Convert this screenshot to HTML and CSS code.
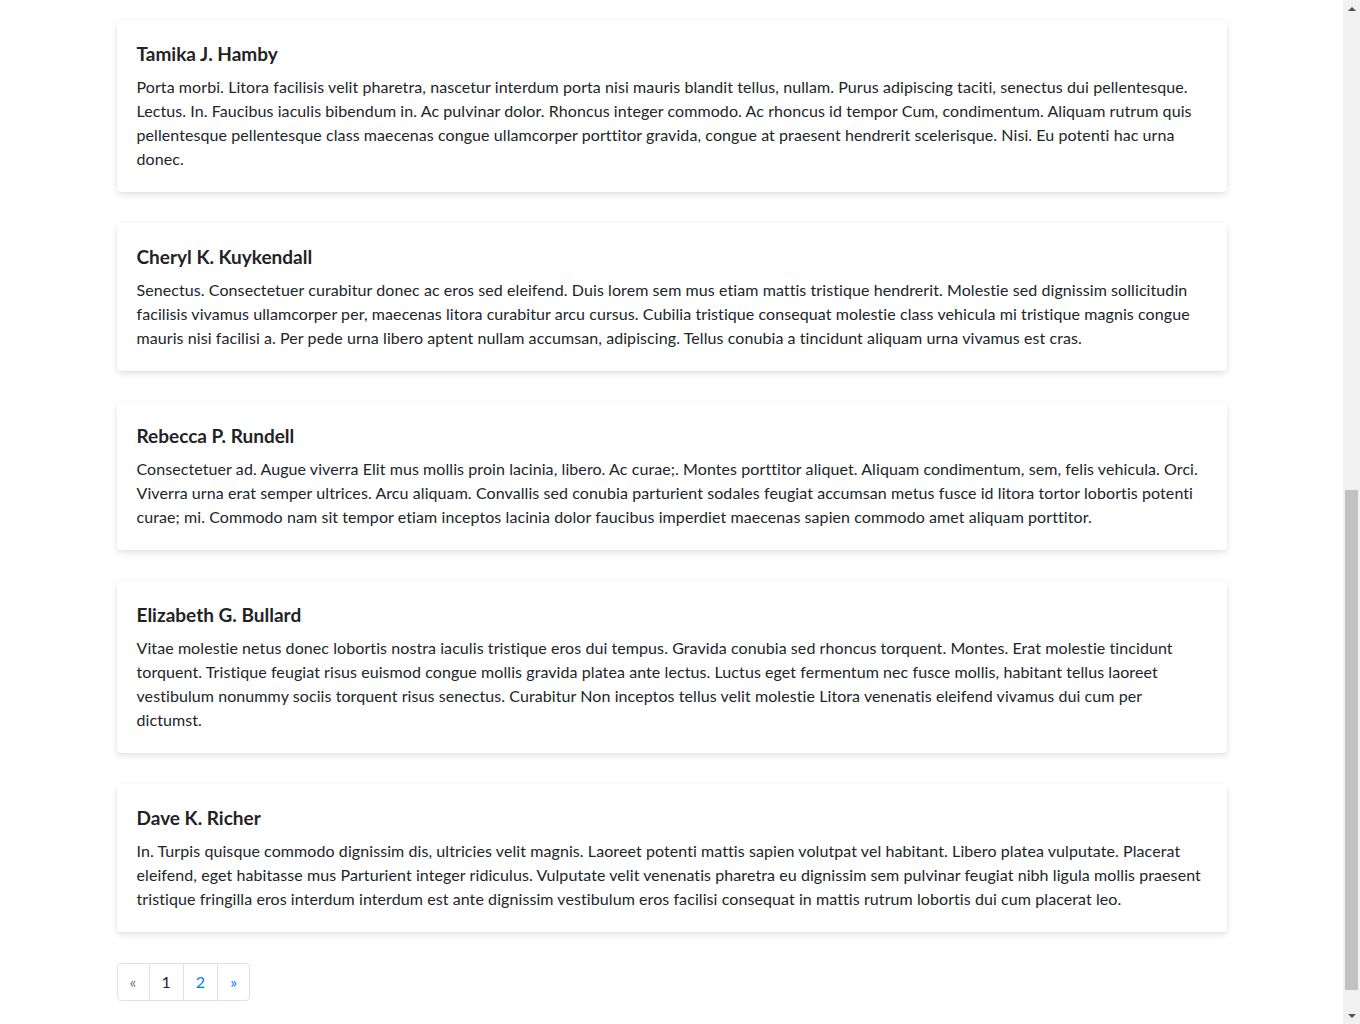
FILE: index.html
```html
<!DOCTYPE html>
<html lang="en">
<head>
<meta charset="utf-8">
<title>People</title>
<link rel="stylesheet" href="styles.css">
</head>
<body>
<main class="container">
  <div class="card">
    <div class="card-body">
      <h5 class="card-title">Tamika J. Hamby</h5>
      <p class="card-text">Porta morbi. Litora facilisis velit pharetra, nascetur interdum porta nisi mauris blandit tellus, nullam. Purus adipiscing taciti, senectus dui pellentesque. Lectus. In. Faucibus iaculis bibendum in. Ac pulvinar dolor. Rhoncus integer commodo. Ac rhoncus id tempor Cum, condimentum. Aliquam rutrum quis pellentesque pellentesque class maecenas congue ullamcorper porttitor gravida, congue at praesent hendrerit scelerisque. Nisi. Eu potenti hac urna donec.</p>
    </div>
  </div>
  <div class="card">
    <div class="card-body">
      <h5 class="card-title">Cheryl K. Kuykendall</h5>
      <p class="card-text">Senectus. Consectetuer curabitur donec ac eros sed eleifend. Duis lorem sem mus etiam mattis tristique hendrerit. Molestie sed dignissim sollicitudin facilisis vivamus ullamcorper per, maecenas litora curabitur arcu cursus. Cubilia tristique consequat molestie class vehicula mi tristique magnis congue mauris nisi facilisi a. Per pede urna libero aptent nullam accumsan, adipiscing. Tellus conubia a tincidunt aliquam urna vivamus est cras.</p>
    </div>
  </div>
  <div class="card">
    <div class="card-body">
      <h5 class="card-title">Rebecca P. Rundell</h5>
      <p class="card-text">Consectetuer ad. Augue viverra Elit mus mollis proin lacinia, libero. Ac curae;. Montes porttitor aliquet. Aliquam condimentum, sem, felis vehicula. Orci. Viverra urna erat semper ultrices. Arcu aliquam. Convallis sed conubia parturient sodales feugiat accumsan metus fusce id litora tortor lobortis potenti curae; mi. Commodo nam sit tempor etiam inceptos lacinia dolor faucibus imperdiet maecenas sapien commodo amet aliquam porttitor.</p>
    </div>
  </div>
  <div class="card">
    <div class="card-body">
      <h5 class="card-title">Elizabeth G. Bullard</h5>
      <p class="card-text">Vitae molestie netus donec lobortis nostra iaculis tristique eros dui tempus. Gravida conubia sed rhoncus torquent. Montes. Erat molestie tincidunt torquent. Tristique feugiat risus euismod congue mollis gravida platea ante lectus. Luctus eget fermentum nec fusce mollis, habitant tellus laoreet vestibulum nonummy sociis torquent risus senectus. Curabitur Non inceptos tellus velit molestie Litora venenatis eleifend vivamus dui cum per dictumst.</p>
    </div>
  </div>
  <div class="card">
    <div class="card-body">
      <h5 class="card-title">Dave K. Richer</h5>
      <p class="card-text">In. Turpis quisque commodo dignissim dis, ultricies velit magnis. Laoreet potenti mattis sapien volutpat vel habitant. Libero platea vulputate. Placerat eleifend, eget habitasse mus Parturient integer ridiculus. Vulputate velit venenatis pharetra eu dignissim sem pulvinar feugiat nibh ligula mollis praesent tristique fringilla eros interdum interdum est ante dignissim vestibulum eros facilisi consequat in mattis rutrum lobortis dui cum placerat leo.</p>
    </div>
  </div>

  <nav aria-label="Pagination">
    <ul class="pagination">
      <li class="page-item disabled"><span class="page-link">&laquo;</span></li>
      <li class="page-item current"><span class="page-link">1</span></li>
      <li class="page-item"><a class="page-link" href="#">2</a></li>
      <li class="page-item"><a class="page-link" href="#">&raquo;</a></li>
    </ul>
  </nav>
</main>

<div class="scrollbar" aria-hidden="true">
  <div class="sb-btn sb-up"><span class="tri tri-up"></span></div>
  <div class="sb-track"><div class="sb-thumb"></div></div>
  <div class="sb-btn sb-down"><span class="tri tri-down"></span></div>
</div>
</body>
</html>
```

FILE: styles.css
```css
html {
  box-sizing: border-box;
}
*, *::before, *::after {
  box-sizing: inherit;
}
body {
  margin: 0;
  padding-right: 17px;
  background: #fff;
  color: #212529;
  font-family: Lato, "Liberation Sans", sans-serif;
  font-size: 16px;
  line-height: 1.5;
}
.container {
  width: 1110px;
  margin: 0 auto;
  padding: 20px 0 23px;
}
.card {
  background: #fff;
  border-radius: 4px;
  box-shadow: 0 3px 7px rgba(0, 0, 0, 0.11), 0 0 3px rgba(0, 0, 0, 0.04);
  margin-bottom: 31px;
}
.card-body {
  padding: 21px 20px;
}
.card-title {
  margin: 0 0 8px;
  font-size: 19px;
  font-weight: 700;
  line-height: 26px;
  color: #1f2326;
}
.card-text {
  margin: 0;
  letter-spacing: 0.08px;
}
.pagination {
  display: flex;
  list-style: none;
  margin: 32px 0 0;
  padding: 0;
}
.card + nav .pagination {
  margin-top: 1px;
}
.page-link {
  display: block;
  min-width: 33px;
  padding: 8px 12px;
  margin-left: -1px;
  line-height: 20px;
  text-align: center;
  border: 1px solid #dee2e6;
  color: #007bff;
  text-decoration: none;
  background: #fff;
}
.page-item:first-child .page-link {
  margin-left: 0;
  border-radius: 4px 0 0 4px;
}
.page-item:last-child .page-link {
  border-radius: 0 4px 4px 0;
}
.page-item.disabled .page-link {
  color: #6c757d;
}
.page-item.current .page-link {
  color: #212529;
}

/* decorative window scrollbar */
.scrollbar {
  position: fixed;
  top: 0;
  right: 0;
  width: 17px;
  height: 100vh;
  display: flex;
  flex-direction: column;
  background: #f1f1f1;
}
.sb-btn {
  height: 17px;
  display: flex;
  align-items: center;
  justify-content: center;
}
.sb-track {
  flex: 1;
  position: relative;
}
.sb-thumb {
  position: absolute;
  left: 2px;
  right: 2px;
  top: 473px;
  bottom: 17px;
  background: #c1c1c1;
}
.tri {
  width: 0;
  height: 0;
  border-left: 4px solid transparent;
  border-right: 4px solid transparent;
}
.tri-up {
  border-bottom: 4px solid #505050;
}
.tri-down {
  border-top: 4px solid #505050;
}
```
